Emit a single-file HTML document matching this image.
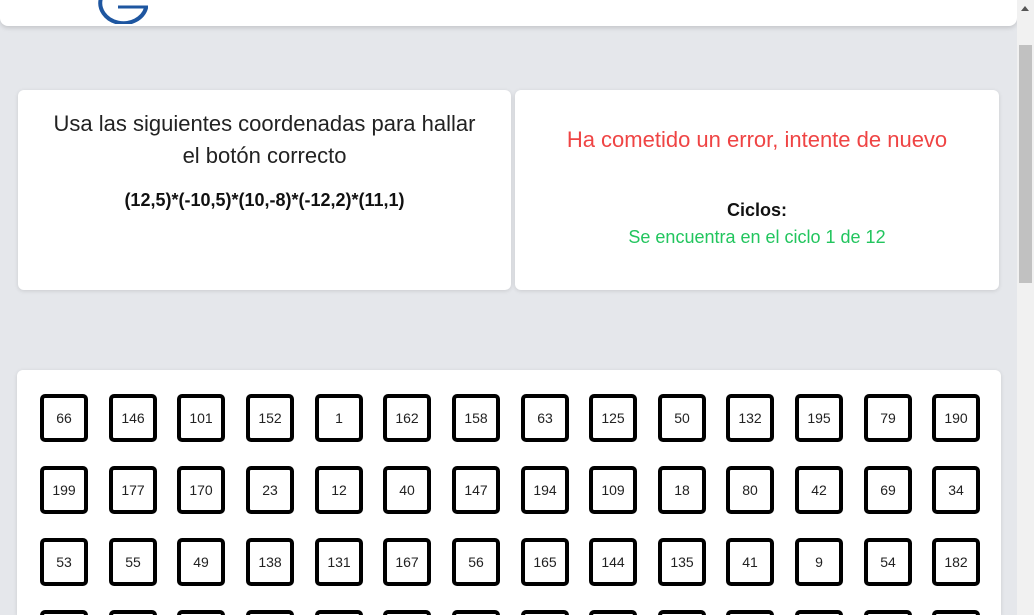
<!DOCTYPE html>
<html style="width:1034px;height:615px;overflow:hidden"><head><meta charset="utf-8"><style>
*{box-sizing:border-box;margin:0;padding:0}
body{width:1034px;height:615px;overflow:hidden;background:#e5e7eb;font-family:"Liberation Sans",sans-serif;position:relative;color:#1f2937}
.hdr{position:absolute;left:0;top:-20px;width:1017px;height:46px;background:#fff;border-radius:8px;box-shadow:0 2px 5px rgba(0,0,0,.15)}
.sb{position:absolute;left:1017px;top:0;width:17px;height:615px;background:#f1f1f1}
.thumb{position:absolute;left:2px;top:45px;width:13px;height:238px;background:#c1c1c1}
.card{position:absolute;background:#fff;border-radius:6px;box-shadow:0 1px 4px rgba(0,0,0,.12)}
.t1{position:absolute;left:0;width:100%;text-align:center}
.b{position:absolute;width:48px;height:48px;border:4px solid #000;border-radius:5px;font-size:14px;line-height:40px;text-align:center;color:#222}
</style></head><body>
<div class="hdr"><svg style="position:absolute;left:96px;top:14px" width="60" height="30"><path d="M5 4 A23 20 0 0 0 50 14" stroke="#1e56a0" stroke-width="4" fill="none"/><path d="M22 13 L52 13" stroke="#1e56a0" stroke-width="3"/></svg></div>
<div class="sb"><div style="position:absolute;left:4px;top:6px;border-left:4.5px solid transparent;border-right:4.5px solid transparent;border-bottom:5px solid #555"></div><div class="thumb"></div></div>
<div class="card" style="left:18px;top:90px;width:493px;height:200px">
<div class="t1" style="top:18px;font-size:22px;line-height:32px;color:#222">Usa las siguientes coordenadas para hallar<br>el botón correcto</div>
<div class="t1" style="top:100px;font-size:18px;font-weight:bold;color:#111">(12,5)*(-10,5)*(10,-8)*(-12,2)*(11,1)</div>
</div>
<div class="card" style="left:515px;top:90px;width:484px;height:200px">
<div class="t1" style="top:37px;font-size:22px;color:#ef4444">Ha cometido un error, intente de nuevo</div>
<div class="t1" style="top:110px;font-size:18px;font-weight:bold;color:#111">Ciclos:</div>
<div class="t1" style="top:137px;font-size:18px;color:#22c55e">Se encuentra en el ciclo 1 de 12</div>
</div>
<div class="card" style="left:17px;top:370px;width:984px;height:245px;border-radius:6px 6px 0 0"></div>
<div style="position:absolute;left:40px;top:394px;width:940px;height:221px;overflow:hidden">
<div class="b" style="left:0px;top:0">66</div><div class="b" style="left:69px;top:0">146</div><div class="b" style="left:137px;top:0">101</div><div class="b" style="left:206px;top:0">152</div><div class="b" style="left:275px;top:0">1</div><div class="b" style="left:343px;top:0">162</div><div class="b" style="left:412px;top:0">158</div><div class="b" style="left:481px;top:0">63</div><div class="b" style="left:549px;top:0">125</div><div class="b" style="left:618px;top:0">50</div><div class="b" style="left:686px;top:0">132</div><div class="b" style="left:755px;top:0">195</div><div class="b" style="left:824px;top:0">79</div><div class="b" style="left:892px;top:0">190</div>
<div class="b" style="left:0px;top:72px">199</div><div class="b" style="left:69px;top:72px">177</div><div class="b" style="left:137px;top:72px">170</div><div class="b" style="left:206px;top:72px">23</div><div class="b" style="left:275px;top:72px">12</div><div class="b" style="left:343px;top:72px">40</div><div class="b" style="left:412px;top:72px">147</div><div class="b" style="left:481px;top:72px">194</div><div class="b" style="left:549px;top:72px">109</div><div class="b" style="left:618px;top:72px">18</div><div class="b" style="left:686px;top:72px">80</div><div class="b" style="left:755px;top:72px">42</div><div class="b" style="left:824px;top:72px">69</div><div class="b" style="left:892px;top:72px">34</div>
<div class="b" style="left:0px;top:144px">53</div><div class="b" style="left:69px;top:144px">55</div><div class="b" style="left:137px;top:144px">49</div><div class="b" style="left:206px;top:144px">138</div><div class="b" style="left:275px;top:144px">131</div><div class="b" style="left:343px;top:144px">167</div><div class="b" style="left:412px;top:144px">56</div><div class="b" style="left:481px;top:144px">165</div><div class="b" style="left:549px;top:144px">144</div><div class="b" style="left:618px;top:144px">135</div><div class="b" style="left:686px;top:144px">41</div><div class="b" style="left:755px;top:144px">9</div><div class="b" style="left:824px;top:144px">54</div><div class="b" style="left:892px;top:144px">182</div>
<div class="b" style="left:0px;top:216px"></div><div class="b" style="left:69px;top:216px"></div><div class="b" style="left:137px;top:216px"></div><div class="b" style="left:206px;top:216px"></div><div class="b" style="left:275px;top:216px"></div><div class="b" style="left:343px;top:216px"></div><div class="b" style="left:412px;top:216px"></div><div class="b" style="left:481px;top:216px"></div><div class="b" style="left:549px;top:216px"></div><div class="b" style="left:618px;top:216px"></div><div class="b" style="left:686px;top:216px"></div><div class="b" style="left:755px;top:216px"></div><div class="b" style="left:824px;top:216px"></div><div class="b" style="left:892px;top:216px"></div>
</div>
</body></html>
